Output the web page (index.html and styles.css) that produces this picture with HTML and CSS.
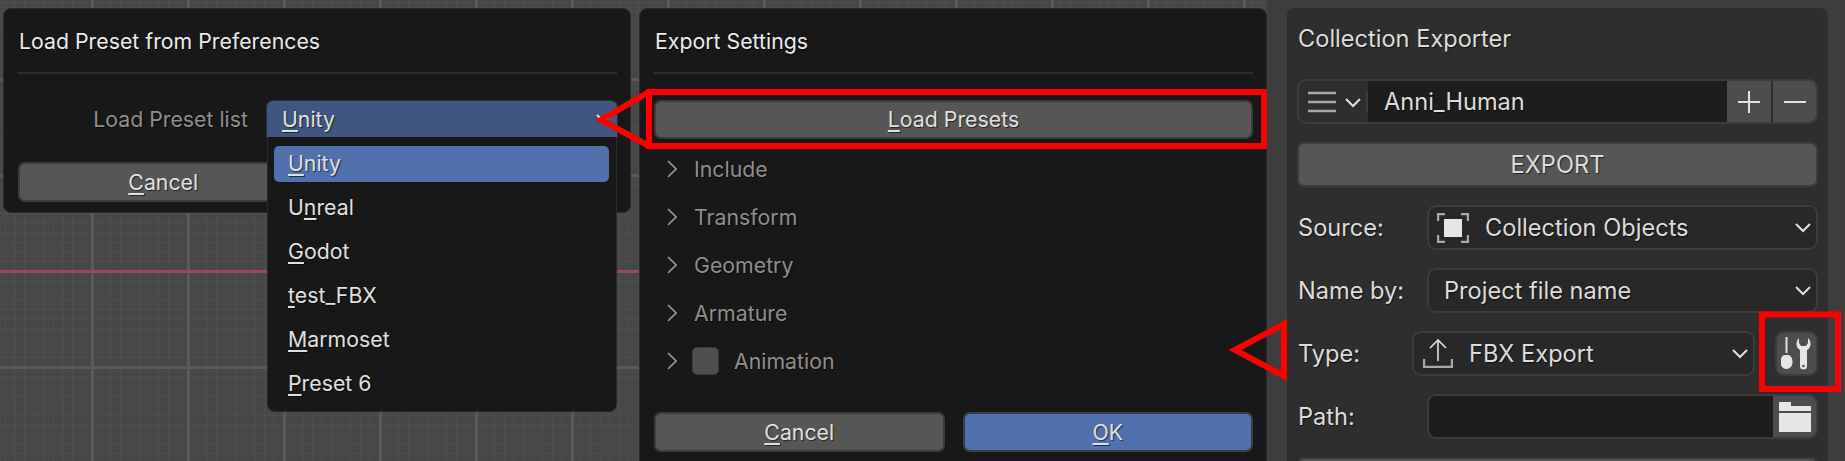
FILE: index.html
```html
<!DOCTYPE html>
<html>
 <head>
	<title>Collection Exporter presets</title>
	<link rel="stylesheet" href="styles.css">
 </head>
 <body>
	<div class="viewport">
		<!-- load preset dialog -->
		<div class="panel dialog first">
			<div class="head">Load Preset from Preferences</div>
			<div class="preset-row">
				<span class="preset-label">Load Preset list</span>
				<div class="preset-select">
					<span><u>U</u>nity</span>
					<svg class="drop" width="16" height="10" viewBox="0 0 16 10"><path class="light" d="M1 1l7 7 7-7"/></svg>
				</div>
				<div class="popup">
					<div class="item active"><u>U</u>nity</div>
					<div class="item">U<u>n</u>real</div>
					<div class="item"><u>G</u>odot</div>
					<div class="item"><u>t</u>est_FBX</div>
					<div class="item"><u>M</u>armoset</div>
					<div class="item"><u>P</u>reset 6</div>
				</div>
			</div>
			<div class="actions">
				<div class="btn"><u>C</u>ancel</div>
				<div class="btn primary"><u>O</u>K</div>
			</div>
		</div>

		<!-- export settings dialog -->
		<div class="panel dialog second">
			<div class="head">Export Settings</div>
			<div class="btn wide"><u>L</u>oad Presets</div>
			<div class="sections">
				<div class="section"><svg class="caret" width="10" height="18" viewBox="0 0 10 18"><path d="M1 1l8 8-8 8"/></svg>Include</div>
				<div class="section"><svg class="caret" width="10" height="18" viewBox="0 0 10 18"><path d="M1 1l8 8-8 8"/></svg>Transform</div>
				<div class="section"><svg class="caret" width="10" height="18" viewBox="0 0 10 18"><path d="M1 1l8 8-8 8"/></svg>Geometry</div>
				<div class="section"><svg class="caret" width="10" height="18" viewBox="0 0 10 18"><path d="M1 1l8 8-8 8"/></svg>Armature</div>
				<div class="section"><svg class="caret" width="10" height="18" viewBox="0 0 10 18"><path d="M1 1l8 8-8 8"/></svg><span class="check"></span>Animation</div>
			</div>
			<div class="actions">
				<div class="btn"><u>C</u>ancel</div>
				<div class="btn primary"><u>O</u>K</div>
			</div>
		</div>

		<!-- properties side panel -->
		<div class="sidebar">
			<div class="panel side">
				<div class="side-title">Collection Exporter</div>
				<div class="side-rows">
					<div class="side-row list">
						<div class="list-menu">
							<svg width="53" height="22" viewBox="0 0 53 22"><path class="grey" d="M0 2h28M0 11h28M0 20h28"/><path class="light" d="M38 8l7 7 7-7"/></svg>
						</div>
						<div class="list-name">Anni_Human</div>
						<div class="list-btn"><svg width="22" height="22" viewBox="0 0 22 22"><path class="light" d="M11 0v22M0 11h22"/></svg></div>
						<div class="list-btn"><svg width="22" height="22" viewBox="0 0 22 22"><path class="light" d="M0 11h22"/></svg></div>
					</div>
					<div class="side-row btn export">EXPORT</div>
					<div class="side-row">
						<span class="side-label">Source:</span>
						<div class="field">
							<svg class="field-icon" width="32" height="30" viewBox="0 0 32 30"><path class="grey" d="M1 8V1h7M24 1h7v7M1 22v7h7M24 29h7v-7"/><rect class="solid" x="7" y="6" width="18" height="18"/></svg>
							<span>Collection Objects</span>
							<svg class="drop" width="16" height="10" viewBox="0 0 16 10"><path class="light" d="M1 1l7 7 7-7"/></svg>
						</div>
					</div>
					<div class="side-row">
						<span class="side-label">Name by:</span>
						<div class="field plain">
							<span>Project file name</span>
							<svg class="drop" width="16" height="10" viewBox="0 0 16 10"><path class="light" d="M1 1l7 7 7-7"/></svg>
						</div>
					</div>
					<div class="side-row">
						<span class="side-label type">Type:</span>
						<div class="field typed">
							<svg class="field-icon" width="30" height="29" viewBox="0 0 30 29"><path class="light thin" d="M15 2v20M7 9l8-8 8 8"/><path class="grey" d="M1 20v8h28v-8"/></svg>
							<span>FBX Export</span>
							<svg class="drop" width="16" height="10" viewBox="0 0 16 10"><path class="light" d="M1 1l7 7 7-7"/></svg>
						</div>
						<div class="tool-btn">
							<svg width="32" height="33" viewBox="0 0 32 33">
								<path class="light" d="M5.500 0v16"/>
								<path class="solid" d="M3 18h5c2 1 3.500 3.500 3.500 7c0 4-2.500 7-6 7s-6-3-6-7c0-3.500 1.500-6 3.500-7z"/>
								<path class="solid" d="M18 1C16 3 15.500 5 15.500 7C15.500 10 17 12 19 13V29A3.500 3.500 0 0 0 26 29V13C28 12 29.500 10 29.500 7C29.500 5 29 3 27 1V6L25 9H20L18 6Z"/>
								<circle class="hole" cx="22.500" cy="29" r="1.300"/>
							</svg>
						</div>
					</div>
					<div class="side-row">
						<span class="side-label">Path:</span>
						<div class="path">
							<div class="path-input"></div>
							<div class="path-btn">
								<svg width="32" height="30" viewBox="0 0 32 30"><path class="solid" d="M0 0h12v4h20v5H0zM0 11h32v19H0z"/></svg>
							</div>
						</div>
					</div>
					<div class="side-row btn"></div>
				</div>
			</div>
		</div>

		<!-- red annotations -->
		<svg class="marks" width="1845" height="461" viewBox="0 0 1845 461">
			<rect x="649" y="92" width="615" height="54"/>
			<path d="M649 92L601 120L649 146"/>
			<rect x="1762" y="314.500" width="76" height="74.500"/>
			<path d="M1235 350L1284 324V376Z"/>
		</svg>
	</div>
 </body>
</html>
```
FILE: styles.css
```css
body {
	margin: 0;
	background: #474747;
	overflow: hidden;
}

u {
	text-underline-offset: 3px;
	text-decoration-thickness: 2px;
}

svg path {
	fill: none;
}

.viewport {
	position: relative;
	display: flex;
	align-items: flex-start;
	box-sizing: border-box;
	height: 461px;
	padding: 8px 0 0 3px;
	overflow: hidden;
	font-family: "Inter", "Liberation Sans", sans-serif;
	font-size: 21.300px;
	color: #e0e0e0;
	text-shadow: 1px 1px 1px rgba(0,0,0,.6);
	background-color: #474747;
	background-image:
		linear-gradient(#9a4a58, #9a4a58),
		linear-gradient(#5a5a5a 3px, transparent 3px),
		linear-gradient(90deg, #5a5a5a 3px, transparent 3px),
		linear-gradient(#4e4e4e 1px, transparent 1px),
		linear-gradient(90deg, #4e4e4e 1px, transparent 1px);
	background-size: 100% 3px, 96px 96px, 96px 96px, 9.600px 9.600px, 9.600px 9.600px;
	background-position: 0 270px, 0 78px, 91px 0, 0 2px, 5px 0;
	background-repeat: repeat-x, repeat, repeat, repeat, repeat;
}

.panel {
	flex: none;
	box-sizing: border-box;
}

.dialog {
	display: flex;
	flex-direction: column;
	background: #181818;
	border: 1px solid #2a2a2a;
	border-radius: 8px;
	padding: 0 13px;
}
.first {
	width: 628px;
	height: 205px;
}
.second {
	width: 628px;
	height: 480px;
	margin-left: 8px;
}

.head {
	height: 63px;
	line-height: 64px;
	border-bottom: 2px solid #2d2d2d;
	padding-left: 2px;
	color: #ececec;
}

.preset-row {
	position: relative;
	display: flex;
	align-items: center;
	margin-top: 27px;
	height: 36px;
}
.preset-label {
	width: 250px;
	padding-right: 19px;
	box-sizing: border-box;
	text-align: right;
	color: #8e8e8e;
}
.preset-select {
	position: relative;
	box-sizing: border-box;
	width: 350px;
	height: 36px;
	line-height: 36px;
	padding-left: 15px;
	background: #3f5780;
	border-radius: 6px 6px 0 0;
	box-shadow: 0 0 0 1px #2d2d2d;
}
.preset-select .drop {
	top: 13px;
}

.popup {
	position: absolute;
	z-index: 2;
	left: 250px;
	top: 36px;
	box-sizing: border-box;
	width: 350px;
	height: 275px;
	padding: 9px 7px 0 6px;
	background: #181818;
	border: 1px solid #2a2a2a;
	border-top: 0;
	border-radius: 0 0 8px 8px;
}
.item {
	height: 44px;
	line-height: 35px;
	padding-left: 14px;
}
.item.active {
	height: 36px;
	margin-bottom: 8px;
	background: #5070ae;
	border-radius: 5px;
}

.actions {
	display: flex;
	gap: 18px;
	padding-left: 1px;
}
.first .actions {
	margin-top: 25px;
}
.second .actions {
	margin-top: 27px;
}

.btn {
	box-sizing: border-box;
	height: 40px;
	flex: 1;
	line-height: 36px;
	text-align: center;
	background: #565656;
	border: 2px solid #3c3c3c;
	border-radius: 7px;
}
.btn.primary {
	background: #5070ae;
}
.btn.wide {
	flex: none;
	height: 39px;
	line-height: 34px;
	margin: 26px 0 0 1px;
}

.sections {
	margin-top: 6px;
}
.section {
	display: flex;
	align-items: center;
	height: 48px;
	padding-left: 14px;
	color: #8e8e8e;
}
.caret {
	margin-right: 17px;
}
.caret path {
	stroke: #9a9a9a;
	stroke-width: 1.600;
}
.check {
	box-sizing: border-box;
	width: 27px;
	height: 28px;
	margin: 0 15px 0 -2px;
	background: #4f4f4f;
	border: 1px solid #3a3a3a;
	border-radius: 5px;
}

.sidebar {
	flex: 1;
	align-self: stretch;
	margin: -8px 0 0 0;
	padding: 8px 0 0 20px;
	background: #3d3d3d;
}

.side {
	width: 541px;
	height: 480px;
	padding: 0 10px;
	background: #2e2e2e;
	border-radius: 8px 8px 0 0;
	font-size: 23.600px;
	color: #dcdcdc;
}
.side-title {
	height: 71px;
	line-height: 62px;
	padding-left: 1px;
}
.side-rows {
	display: flex;
	flex-direction: column;
	gap: 18px;
}
.side-row {
	display: flex;
	align-items: center;
	height: 45px;
	flex: none;
}
.side-row.btn {
	line-height: 41px;
	justify-content: center;
}
.side-label {
	width: 130px;
	padding-left: 1px;
	box-sizing: border-box;
	flex: none;
}
.side-label.type {
	width: 115px;
}

.list {
	box-sizing: border-box;
	border: 2px solid #3c3c3c;
	border-radius: 9px;
	background: #2e2e2e;
	overflow: hidden;
}
.list-menu {
	width: 69px;
	padding: 0 0 0 9px;
	box-sizing: border-box;
	flex: none;
	display: flex;
	border-right: 2px solid #3c3c3c;
}
.list-name {
	flex: 1;
	align-self: stretch;
	line-height: 41px;
	padding-left: 16px;
	background: #1d1d1d;
}
.list-btn {
	width: 44px;
	align-self: stretch;
	display: flex;
	align-items: center;
	justify-content: center;
	background: #4d4d4d;
	flex: none;
}
.list-btn + .list-btn {
	margin-left: 2px;
	width: 43px;
}

.field {
	position: relative;
	flex: 1;
	box-sizing: border-box;
	height: 45px;
	display: flex;
	align-items: center;
	background: #282828;
	border: 2px solid #3c3c3c;
	border-radius: 9px;
	padding-left: 8px;
}
.field.plain {
	padding-left: 15px;
}
.field.typed {
	padding-left: 9px;
}
.field-icon {
	margin-right: 16px;
}
.drop {
	position: absolute;
	right: 5px;
	top: 16px;
}

.tool-btn {
	box-sizing: border-box;
	width: 43px;
	height: 45px;
	margin-left: 20px;
	display: flex;
	align-items: center;
	justify-content: center;
	background: #4d4d4d;
	border: 2px solid #3c3c3c;
	border-radius: 9px;
	flex: none;
}

.path {
	flex: 1;
	display: flex;
	height: 45px;
	box-sizing: border-box;
	border: 2px solid #3c3c3c;
	border-radius: 9px;
	overflow: hidden;
}
.path-input {
	flex: 1;
	background: #1d1d1d;
}
.path-btn {
	width: 43px;
	display: flex;
	align-items: center;
	justify-content: center;
	background: #4d4d4d;
}

.light {
	stroke: #e0e0e0;
	stroke-width: 2;
}
.light.thin {
	stroke-width: 1.600;
}
.grey {
	stroke: #a8a8a8;
	stroke-width: 2.400;
}
svg path.solid,
svg .solid {
	fill: #e6e6e6;
}
.hole {
	fill: #4d4d4d;
}

.marks {
	position: absolute;
	left: 0;
	top: 0;
	z-index: 3;
}
.marks path,
.marks rect {
	fill: none;
	stroke: #ff0000;
	stroke-width: 6;
}
```
